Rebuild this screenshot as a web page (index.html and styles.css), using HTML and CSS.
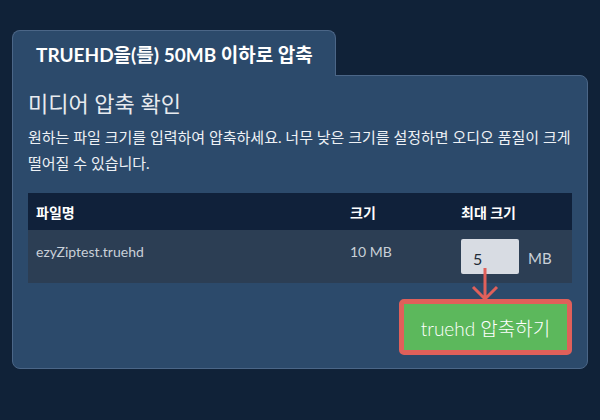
FILE: index.html
```html
<!DOCTYPE html>
<html lang="ko">
<head>
<meta charset="utf-8">
<link rel="stylesheet" href="styles.css">
</head>
<body>
<div class="wrap">
  <div class="tab">TRUEHD을(를) 50MB 이하로 압축</div>
  <div class="panel">
    <h2 class="title">미디어 압축 확인</h2>
    <p class="desc">원하는 파일 크기를 입력하여 압축하세요. 너무 낮은 크기를 설정하면 오디오 품질이 크게 떨어질 수 있습니다.</p>
    <table class="files">
      <thead>
        <tr><th class="c1">파일명</th><th class="c2">크기</th><th class="c3">최대 크기</th></tr>
      </thead>
      <tbody>
        <tr>
          <td class="c1">ezyZiptest.truehd</td>
          <td class="c2">10 MB</td>
          <td class="c3"><div class="maxsize"><span class="inp">5</span><span class="unit">MB</span></div></td>
        </tr>
      </tbody>
    </table>
    <div class="actions">
      <button class="go">truehd 압축하기</button>
    </div>
    <svg class="arrow" width="32" height="40" viewBox="0 0 32 40">
      <path d="M16 2 V33 M4 21 L16 33 L28 21" fill="none" stroke="#e0605a" stroke-width="3"/>
    </svg>
  </div>
</div>
</body>
</html>
```
FILE: styles.css
```css
html, body {
  margin: 0;
  padding: 0;
  background: #102238;
  width: 600px;
  height: 420px;
  overflow: hidden;
}
body {
  font-family: Lato, "Noto Sans CJK KR", sans-serif;
  color: #eef1f5;
}
.wrap {
  padding: 30px 12px 0 12px;
}
.tab {
  display: inline-block;
  position: relative;
  z-index: 2;
  background: #2c4a6b;
  border: 1px solid #4b6687;
  border-bottom: none;
  border-radius: 8px 8px 0 0;
  height: 46px;
  box-sizing: border-box;
  padding: 0 22px 0 23px;
  font-size: 19px;
  font-weight: 700;
  line-height: 47px;
  color: #ffffff;
  margin-bottom: -1px;
}
.panel {
  position: relative;
  background: #2c4a6b;
  border: 1px solid #4b6687;
  border-radius: 0 8px 8px 8px;
  padding: 13px 15px 14px 15px;
  height: 294px;
  box-sizing: border-box;
}
.title {
  margin: 0;
  font-size: 22px;
  font-weight: 400;
  line-height: 30px;
  color: #e8ebef;
}
.desc {
  margin: 5px 0 0 0;
  font-size: 15px;
  line-height: 26px;
  color: #eef1f5;
}
.files {
  margin-top: 17px;
  width: 544px;
  border-collapse: collapse;
  font-size: 14px;
}
.files th {
  background: #10213a;
  color: #ffffff;
  font-weight: 700;
  text-align: left;
  height: 37px;
  padding: 0 8px;
}
.files td {
  background: #2c3e54;
  color: #c9d0d8;
  vertical-align: top;
  height: 53px;
  padding: 13px 8px 0 8px;
  box-sizing: border-box;
  font-size: 14px;
}
.files .c1 { width: 298px; }
.files .c2 { width: 94px; }
.files .c3 { padding-left: 9px; }
.files td.c3 { padding-top: 9px; }
.maxsize {
  display: flex;
  align-items: center;
  gap: 9px;
}
.inp {
  display: block;
  width: 58px;
  height: 35px;
  box-sizing: border-box;
  background: #d8dce3;
  border-radius: 2px;
  color: #1f2b38;
  font-size: 16px;
  line-height: 35px;
  padding-left: 12px;
  padding-top: 2px;
}
.unit {
  font-size: 15px;
  color: #c9d0d8;
  padding-top: 2px;
}
.actions {
  display: flex;
  justify-content: flex-end;
  margin-top: 16px;
}
.go {
  width: 173px;
  height: 56px;
  box-sizing: border-box;
  background: #5cb85c;
  border: 5px solid #e0605a;
  border-radius: 5px;
  color: #ffffff;
  font-family: Lato, "Noto Sans CJK KR", sans-serif;
  font-size: 19px;
  font-weight: 300;
  padding: 0;
}
.arrow {
  position: absolute;
  left: 456px;
  top: 190px;
}
```
